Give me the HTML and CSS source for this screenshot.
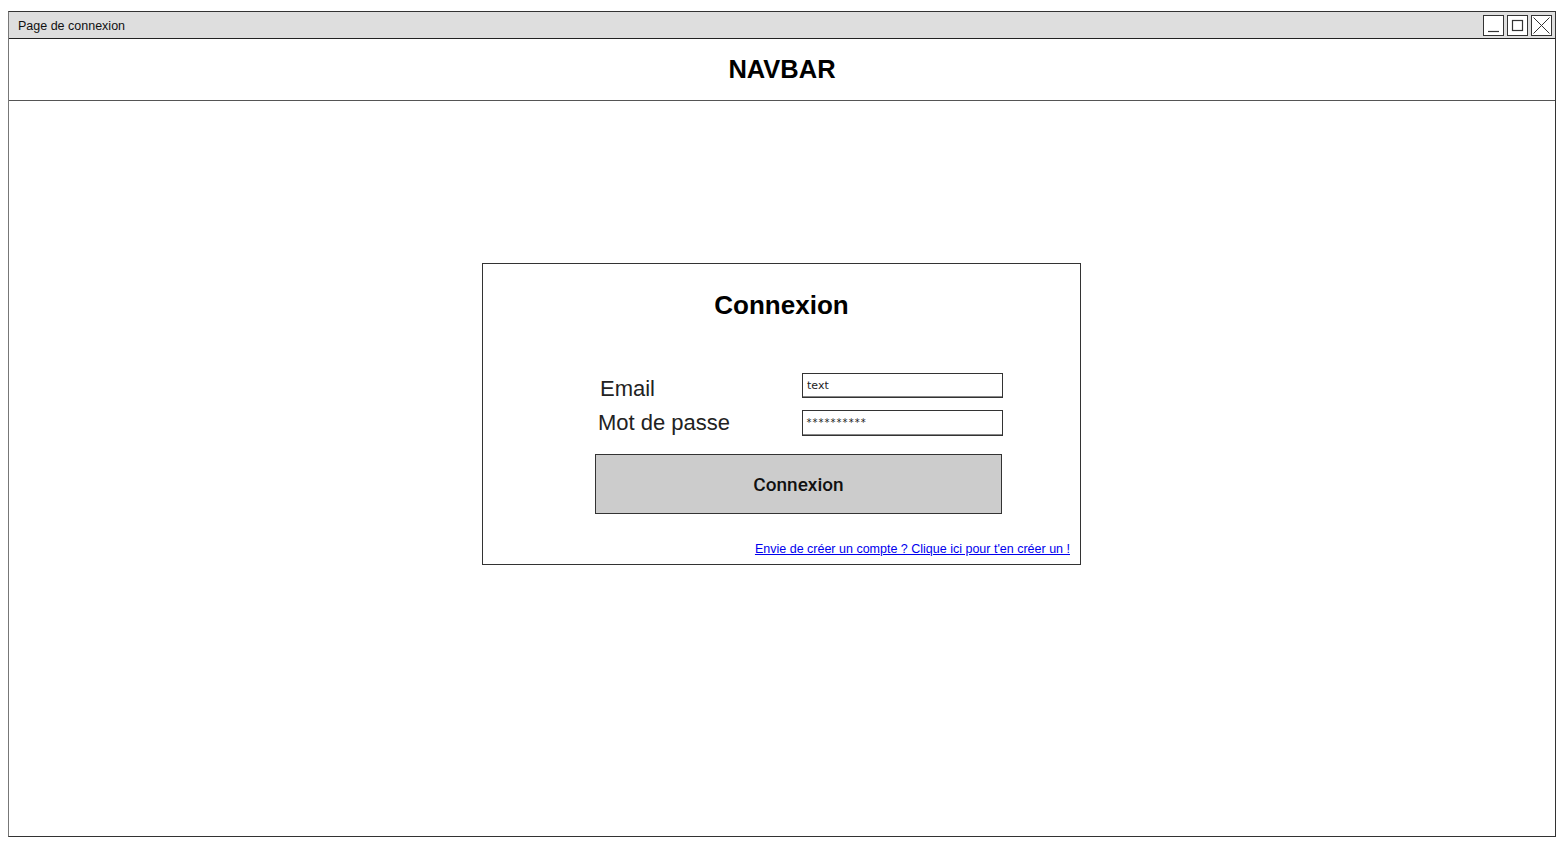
FILE: index.html
```html
<!DOCTYPE html>
<html lang="fr">
<head>
<meta charset="utf-8">
<title>Page de connexion</title>
<link rel="stylesheet" href="styles.css">
</head>
<body>
<div class="window">
  <div class="titlebar">
    <span class="title">Page de connexion</span>
    <div class="controls">
      <span class="ctl"><svg width="19" height="19" viewBox="0 0 19 19"><path d="M4 15.5H15" stroke="#333" stroke-width="1.2"/></svg></span>
      <span class="ctl"><svg width="19" height="19" viewBox="0 0 19 19"><rect x="4.5" y="4.5" width="10" height="10" fill="none" stroke="#333" stroke-width="1.2"/></svg></span>
      <span class="ctl"><svg width="19" height="19" viewBox="0 0 19 19"><path d="M1.5 1.5L17.5 17.5M17.5 1.5L1.5 17.5" stroke="#333" stroke-width="1"/></svg></span>
    </div>
  </div>
  <div class="navbar">NAVBAR</div>
  <div class="main">
    <div class="card">
      <h1 class="card-title">Connexion</h1>
      <div class="form">
        <label class="label label-email">Email</label>
        <div class="input">text</div>
        <label class="label">Mot de passe</label>
        <div class="input input-pw">**********</div>
      </div>
      <div class="button">Connexion</div>
      <div class="link-row"><a href="#" class="link">Envie de créer un compte ? Clique ici pour t'en créer un !</a></div>
    </div>
  </div>
</div>
</body>
</html>
```

FILE: styles.css
```css
html, body {
  margin: 0;
  padding: 0;
  background: #fff;
}
body {
  font-family: "Liberation Sans", Arial, sans-serif;
  color: #111;
}
.window {
  margin: 11px 0 0 8px;
  width: 1548px;
  height: 826px;
  box-sizing: border-box;
  border: 1px solid #333;
  border-left-color: #777;
  display: flex;
  flex-direction: column;
}
.titlebar {
  height: 27px;
  box-sizing: border-box;
  background: #dedede;
  border-bottom: 1px solid #222;
  display: flex;
  align-items: center;
  justify-content: space-between;
  padding: 1px 3px 0 9px;
}
.title {
  font-size: 12.5px;
  color: #111;
}
.controls {
  display: flex;
  gap: 3px;
}
.ctl {
  width: 21px;
  height: 21px;
  box-sizing: border-box;
  border: 1px solid #333;
  background: #fff;
  display: flex;
  align-items: center;
  justify-content: center;
}
.ctl svg { display: block; }
.navbar {
  height: 62px;
  box-sizing: border-box;
  border-bottom: 1px solid #555;
  display: flex;
  align-items: center;
  justify-content: center;
  font-weight: bold;
  font-size: 25.5px;
  color: #000;
}
.main {
  flex: 1;
  display: flex;
  justify-content: center;
  align-items: flex-start;
  padding-top: 162px;
}
.card {
  width: 599px;
  height: 302px;
  box-sizing: border-box;
  border: 1px solid #333;
  padding-top: 26px;
  margin-right: 1px;
  display: flex;
  flex-direction: column;
}
.card-title {
  margin: 0;
  text-align: center;
  font-size: 26px;
  line-height: 30px;
  font-weight: bold;
  color: #000;
}
.form {
  margin: 53px 0 0 115px;
  display: grid;
  grid-template-columns: 204px 201px;
  grid-template-rows: 25px 26px;
  row-gap: 12px;
  align-items: start;
}
.label {
  font-size: 22px;
  line-height: 25px;
  color: #222;
  white-space: nowrap;
}
.label-email {
  margin-left: 2px;
  margin-top: 3px;
}
.input {
  height: 100%;
  box-sizing: border-box;
  border: 1px solid #333;
  box-shadow: inset 0 -1px 0 #888;
  font-family: "DejaVu Sans", sans-serif;
  font-size: 11px;
  line-height: 24px;
  padding-left: 4px;
  color: #222;
}
.input-pw {
  font-family: "DejaVu Sans Mono", monospace;
  font-size: 10px;
  padding-left: 3px;
}
.button {
  margin: 18px 0 0 112px;
  width: 407px;
  height: 60px;
  box-sizing: border-box;
  border: 1px solid #333;
  background: #cccccc;
  display: flex;
  align-items: center;
  justify-content: center;
  font-family: Roboto, "Liberation Sans", sans-serif;
  font-weight: 500;
  font-size: 19px;
  color: #111;
}
.link-row {
  margin-top: 25px;
  padding-right: 10px;
  text-align: right;
}
.link {
  font-size: 12.5px;
  line-height: 14px;
  color: #0000ee;
  text-decoration: underline;
}
```
